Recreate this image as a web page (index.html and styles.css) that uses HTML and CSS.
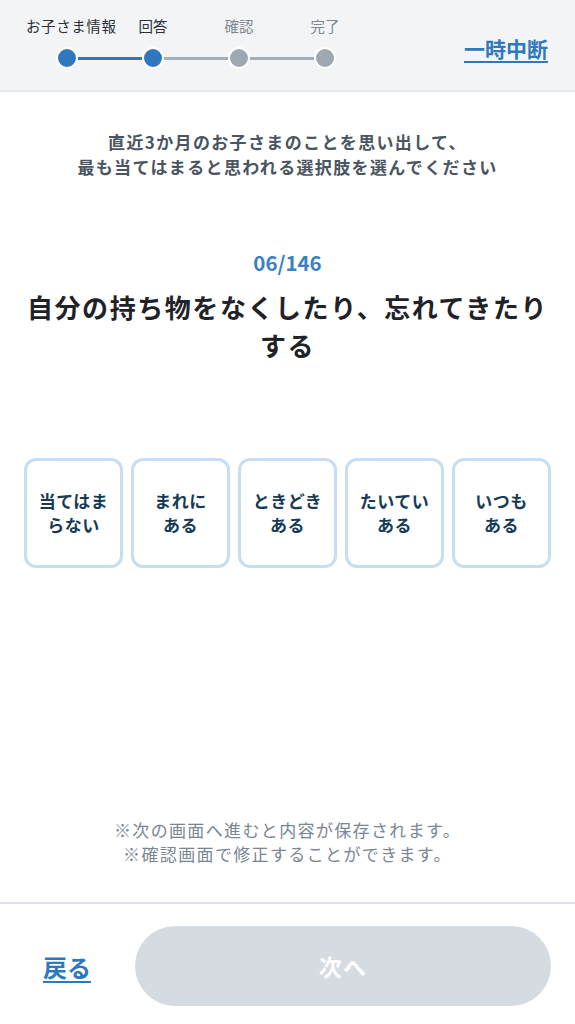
FILE: index.html
```html
<!DOCTYPE html>
<html lang="ja">
<head>
    <meta charset="UTF-8">
    <meta name="viewport" content="width=device-width, initial-scale=1.0">
    <title>回答</title>
    <link rel="stylesheet" href="styles.css">
</head>
<body>
    <div class="page">
        <header class="header">
            <div class="stepper">
                <div class="step-labels">
                    <span class="step-label">お子さま情報</span>
                    <span class="step-label">回答</span>
                    <span class="step-label is-future">確認</span>
                    <span class="step-label is-future">完了</span>
                </div>
                <div class="step-track">
                    <span class="step-dot is-done"></span>
                    <span class="step-line is-done"></span>
                    <span class="step-dot is-done"></span>
                    <span class="step-line"></span>
                    <span class="step-dot"></span>
                    <span class="step-line"></span>
                    <span class="step-dot"></span>
                </div>
            </div>
            <a href="#" class="pause-link">一時中断</a>
        </header>

        <main class="main">
            <p class="lead">
                直近3か月のお子さまのことを思い出して、<br>
                最も当てはまると思われる選択肢を選んでください
            </p>

            <div class="counter">06/146</div>
            <h1 class="question">自分の持ち物をなくしたり、忘れてきたり<br>する</h1>

            <div class="choices">
                <button class="choice">当てはま<br>らない</button>
                <button class="choice">まれに<br>ある</button>
                <button class="choice">ときどき<br>ある</button>
                <button class="choice">たいてい<br>ある</button>
                <button class="choice">いつも<br>ある</button>
            </div>

            <p class="note">
                ※次の画面へ進むと内容が保存されます。<br>
                ※確認画面で修正することができます。
            </p>
        </main>

        <footer class="footer">
            <a href="#" class="back-link">戻る</a>
            <button class="next-btn" disabled>次へ</button>
        </footer>
    </div>
</body>
</html>
```

FILE: styles.css
```css
* {
    margin: 0;
    padding: 0;
    box-sizing: border-box;
}

body {
    font-family: "Noto Sans CJK JP", "Noto Sans", sans-serif;
    background: #fff;
    color: #1f2328;
}

.page {
    min-height: 100vh;
    display: flex;
    flex-direction: column;
}

/* header with progress steps */
.header {
    height: 92px;
    background: #f2f4f6;
    border-bottom: 2px solid #e4e7eb;
    display: flex;
    justify-content: space-between;
    align-items: flex-start;
    padding: 0 27px 0 24px;
}

.stepper {
    padding-top: 15px;
}

.step-labels {
    display: grid;
    grid-template-columns: repeat(4, 86px);
    font-size: 14.5px;
    line-height: 22px;
    color: #2b3036;
    text-align: center;
}

.step-label:first-child {
    margin-left: 2px;
    white-space: nowrap;
    letter-spacing: 0.04em;
}

.step-label.is-future {
    color: #7d8792;
}

.step-track {
    display: flex;
    align-items: center;
    margin-top: 10px;
    padding-left: 32px;
}

.step-dot {
    width: 22px;
    height: 22px;
    border-radius: 50%;
    border: 2px solid #fff;
    background: #9ea8b3;
    flex-shrink: 0;
}

.step-dot.is-done {
    background: #2f78bd;
}

.step-line {
    width: 64px;
    height: 3px;
    background: #a5afb9;
}

.step-line.is-done {
    background: #2f78bd;
}

.pause-link {
    margin-top: 34px;
    font-size: 21px;
    font-weight: 700;
    line-height: 28px;
    color: #2f78bd;
    text-decoration: underline;
    text-underline-offset: 4px;
}

/* question area */
.main {
    flex: 1;
    display: flex;
    flex-direction: column;
    align-items: center;
    text-align: center;
}

.lead {
    margin-top: 37px;
    font-size: 17px;
    font-weight: 700;
    line-height: 25px;
    letter-spacing: 0.08em;
    color: #4a5561;
}

.counter {
    margin-top: 69px;
    font-size: 20.5px;
    font-weight: 700;
    line-height: 28px;
    color: #3a80c3;
}

.question {
    margin-top: 12px;
    font-size: 26px;
    font-weight: 700;
    line-height: 38px;
    letter-spacing: 0.06em;
    color: #1f2328;
}

.choices {
    display: flex;
    gap: 8px;
    margin-top: 94px;
}

.choice {
    width: 99px;
    height: 110px;
    border: 3px solid #c7ddf1;
    border-radius: 12px;
    background: #fff;
    font-family: inherit;
    font-size: 17px;
    font-weight: 700;
    line-height: 24px;
    letter-spacing: 0.03em;
    color: #173a56;
    cursor: pointer;
}

.note {
    margin-top: auto;
    margin-bottom: 36px;
    font-size: 17px;
    line-height: 24px;
    letter-spacing: 0.08em;
    color: #7b8692;
}

/* bottom navigation */
.footer {
    border-top: 2px solid #e1e5ea;
    display: flex;
    align-items: center;
    padding: 22px 24px 18px 43px;
}

.back-link {
    font-size: 24px;
    font-weight: 700;
    color: #2f78bd;
    text-decoration: underline;
    text-underline-offset: 4px;
}

.next-btn {
    flex: 1;
    margin-left: 44px;
    height: 80px;
    border: none;
    border-radius: 40px;
    background: #d5dbe1;
    color: #fff;
    font-family: inherit;
    font-size: 23px;
    font-weight: 700;
    letter-spacing: 0.05em;
}
```
